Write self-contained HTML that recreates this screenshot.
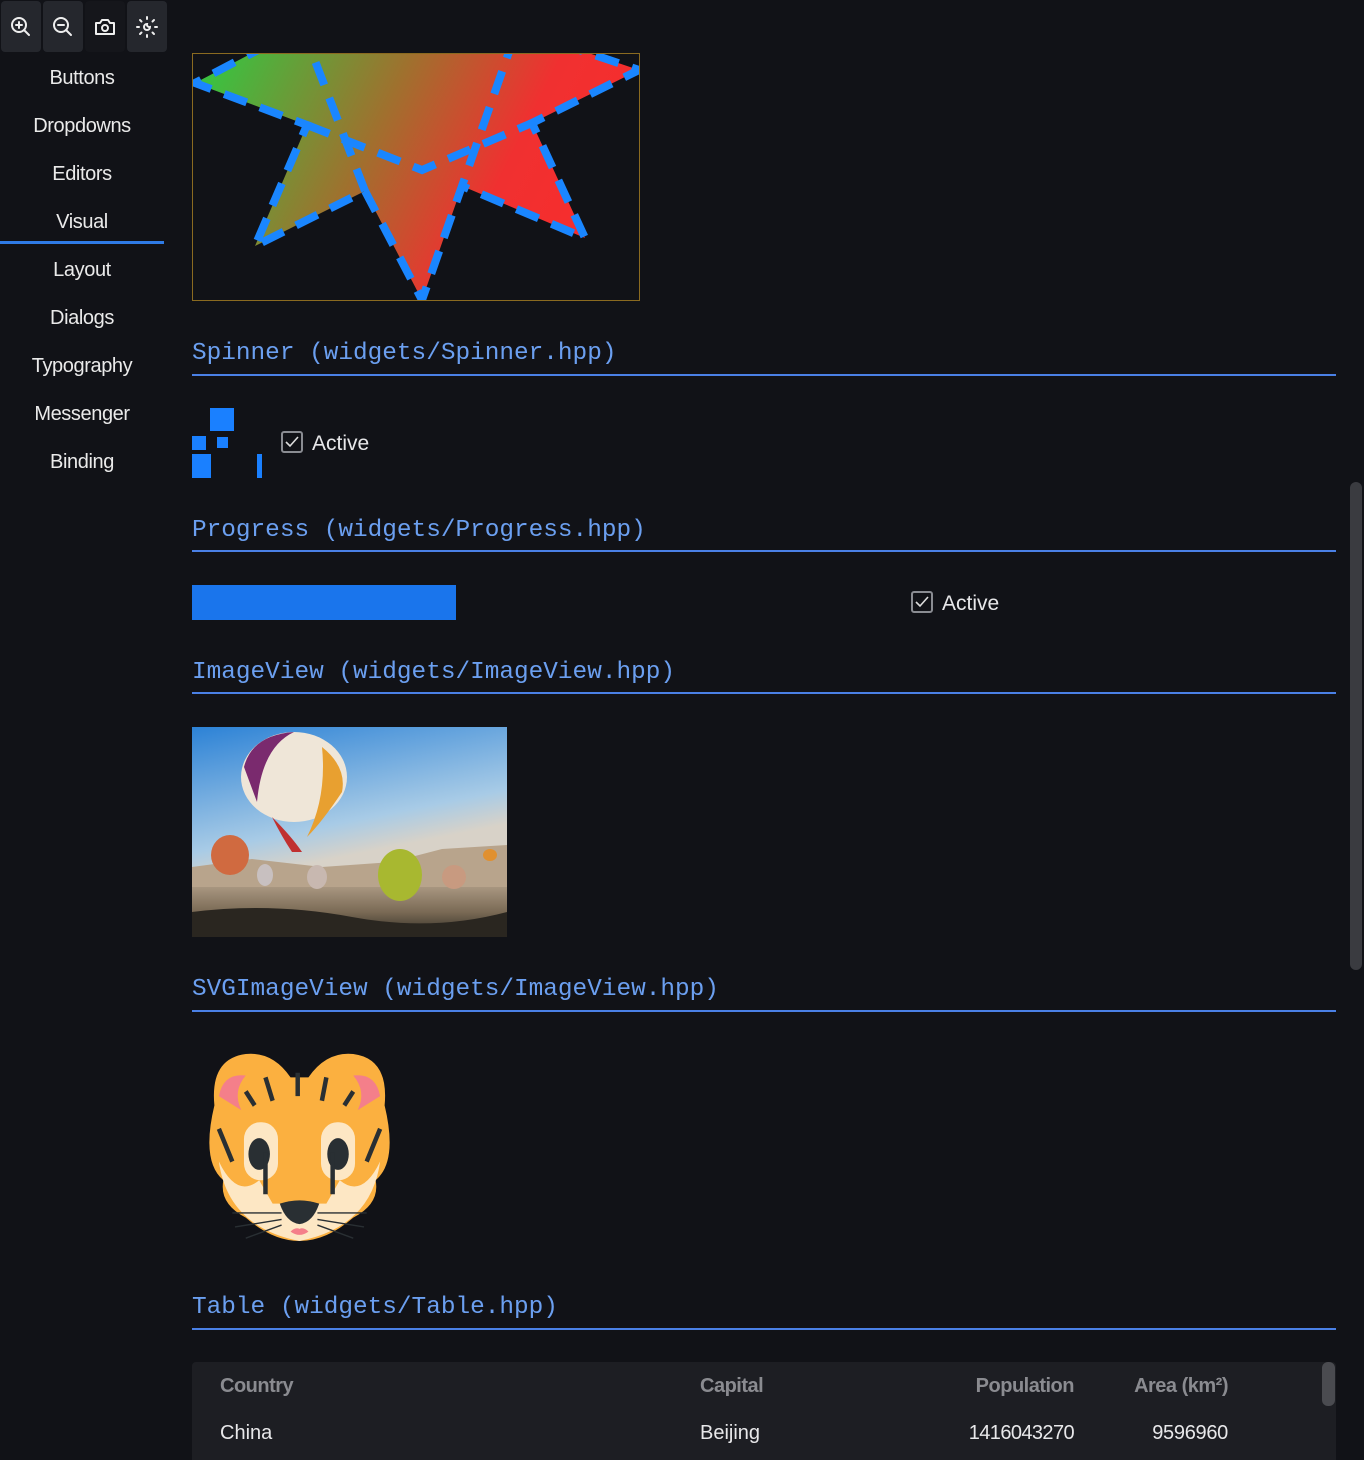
<!DOCTYPE html>
<html><head><meta charset="utf-8"><style>
*{margin:0;padding:0;box-sizing:border-box}
body{width:1364px;height:1460px;background:#111217;overflow:hidden;position:relative;font-family:"Liberation Sans",sans-serif;color:#e8e8ea}
.tb{position:absolute;top:1px;width:40px;height:51px;background:#25272d;border-radius:4px;display:flex;align-items:center;justify-content:center}
.nav{position:absolute;left:0;width:164px;text-align:center;font-size:20px;color:#eaeaea;letter-spacing:-0.4px}
.h{position:absolute;left:192px;font-family:"Liberation Mono",monospace;font-size:24.4px;color:#6b9ff0;white-space:pre}
.ln{position:absolute;left:192px;width:1144px;height:2px;background:#4a80e6}
.cb{position:absolute;width:22px;height:22px;border:2px solid #8a8c92;border-radius:3px}
.lbl{position:absolute;font-size:21px;color:#e8e8ea}
</style></head><body>
<div class="tb" style="left:1px"><svg width="24" height="24" viewBox="0 0 24 24" fill="none" stroke="#eee" stroke-width="2" stroke-linecap="round"><circle cx="10" cy="10" r="7"/><path d="M15 15l5 5M10 7v6M7 10h6"/></svg></div>
<div class="tb" style="left:43px"><svg width="24" height="24" viewBox="0 0 24 24" fill="none" stroke="#eee" stroke-width="2" stroke-linecap="round"><circle cx="10" cy="10" r="7"/><path d="M15 15l5 5M7 10h6"/></svg></div>
<div class="tb" style="left:85px;background:#15161b"><svg width="24" height="24" viewBox="0 0 24 24" fill="none" stroke="#eee" stroke-width="2" stroke-linejoin="round"><path d="M3 8h4l2-3h6l2 3h4v11H3z"/><circle cx="12" cy="13" r="3"/></svg></div>
<div class="tb" style="left:127px"><svg width="24" height="24" viewBox="0 0 24 24" fill="none" stroke="#eee" stroke-width="2" stroke-linecap="round"><path d="M12 2v2M12 20v2M2 12h2M20 12h2M5 5l1.5 1.5M17.5 17.5L19 19M5 19l1.5-1.5M17.5 6.5L19 5"/><path d="M15 12a3 3 0 1 1-3-3 2.5 2.5 0 0 0 3 3z"/></svg></div>

<div class="nav" style="top:67px">Buttons</div>
<div class="nav" style="top:115px">Dropdowns</div>
<div class="nav" style="top:163px">Editors</div>
<div class="nav" style="top:211px">Visual</div>
<div style="position:absolute;left:0;top:241px;width:164px;height:3px;background:#2f7be6"></div>
<div class="nav" style="top:259px">Layout</div>
<div class="nav" style="top:307px">Dialogs</div>
<div class="nav" style="top:355px">Typography</div>
<div class="nav" style="top:403px">Messenger</div>
<div class="nav" style="top:451px">Binding</div>

<svg style="position:absolute;left:192px;top:53px" width="448" height="248" viewBox="192 53 448 248">
<defs><linearGradient id="g" gradientUnits="userSpaceOnUse" x1="220" y1="60" x2="560" y2="230"><stop offset="0" stop-color="#3cc040"/><stop offset="0.45" stop-color="#a0702e"/><stop offset="0.8" stop-color="#f03030"/><stop offset="1" stop-color="#f52e2e"/></linearGradient>
<clipPath id="c"><rect x="192" y="53" width="448" height="248"/></clipPath></defs>
<g clip-path="url(#c)">
<path d="M195 83 L307 125 L255 246 L365 191 L422 300 L462 186 L585 238 L532 123 L639 70 L517 29 L302 27 Z" fill="url(#g)"/>
<g fill="none" stroke="#1a86ff" stroke-width="8" stroke-dasharray="24 14">
<path d="M302 27 L195 83 L307 125 L255 246 L365 191 L422 300 L462 186 L585 238 L532 123 L639 70 L517 29 L462 186"/>
<path d="M302 27 L365 191"/>
<path d="M307 125 L422 170 L532 123"/>
</g>
</g>
<rect x="192.5" y="53.5" width="447" height="247" fill="none" stroke="#8a6a20" stroke-width="1"/>
</svg>

<div class="h" style="top:340px">Spinner (widgets/Spinner.hpp)</div>
<div class="ln" style="top:374px"></div>
<div style="position:absolute;left:210px;top:408px;width:24px;height:23px;background:#1a80ff"></div>
<div style="position:absolute;left:192px;top:436px;width:14px;height:14px;background:#1a80ff"></div>
<div style="position:absolute;left:217px;top:437px;width:11px;height:11px;background:#1a80ff"></div>
<div style="position:absolute;left:192px;top:454px;width:19px;height:24px;background:#1a80ff"></div>
<div style="position:absolute;left:257px;top:454px;width:5px;height:24px;background:#1a80ff"></div>
<div class="cb" style="left:281px;top:431px"><svg width="18" height="18" viewBox="0 0 18 18"><path d="M3 9l4 4 8-9" fill="none" stroke="#ddd" stroke-width="1.6"/></svg></div>
<div class="lbl" style="left:312px;top:432px">Active</div>

<div class="h" style="top:517px">Progress (widgets/Progress.hpp)</div>
<div class="ln" style="top:550px"></div>
<div style="position:absolute;left:192px;top:585px;width:264px;height:35px;background:#1a75ec"></div>
<div class="cb" style="left:911px;top:591px"><svg width="18" height="18" viewBox="0 0 18 18"><path d="M3 9l4 4 8-9" fill="none" stroke="#ddd" stroke-width="1.6"/></svg></div>
<div class="lbl" style="left:942px;top:592px">Active</div>

<div class="h" style="top:659px">ImageView (widgets/ImageView.hpp)</div>
<div class="ln" style="top:692px"></div>
<svg style="position:absolute;left:192px;top:727px" width="315" height="210" viewBox="0 0 315 210">
<defs><linearGradient id="sky" x1="0" y1="0" x2="0.3" y2="1"><stop offset="0" stop-color="#2c82d6"/><stop offset="0.55" stop-color="#a8cbe6"/><stop offset="0.7" stop-color="#d8d2c8"/></linearGradient>
<linearGradient id="gr" x1="0" y1="0" x2="0" y2="1"><stop offset="0" stop-color="#a89680"/><stop offset="0.5" stop-color="#7a6a55"/><stop offset="1" stop-color="#2e2a24"/></linearGradient></defs>
<rect width="315" height="210" fill="url(#sky)"/>
<path d="M0 140 L60 132 L130 140 L200 135 L250 122 L315 118 V210 H0Z" fill="#b8a48c"/>
<rect y="160" width="315" height="50" fill="url(#gr)"/>
<path d="M0 185 Q80 175 160 190 T315 185 V210 H0Z" fill="#2a2620"/>
<ellipse cx="102" cy="50" rx="53" ry="45" fill="#efe6d8"/>
<path d="M52 40 Q60 8 102 5 Q70 20 65 75Z" fill="#7a2a6e"/>
<path d="M130 20 Q155 40 150 65 Q130 95 115 110 Q135 70 130 20Z" fill="#e8a030"/>
<path d="M80 90 Q100 110 110 125 L100 125 Q90 110 80 90Z" fill="#c03030"/>
<ellipse cx="38" cy="128" rx="19" ry="20" fill="#d06a40"/>
<ellipse cx="208" cy="148" rx="22" ry="26" fill="#a8b830"/>
<ellipse cx="262" cy="150" rx="12" ry="12" fill="#c89a80"/>
<ellipse cx="73" cy="148" rx="8" ry="11" fill="#c8c0c0"/>
<ellipse cx="125" cy="150" rx="10" ry="12" fill="#c8b8b0"/>
<ellipse cx="298" cy="128" rx="7" ry="6" fill="#e09030"/>
</svg>

<div class="h" style="top:976px">SVGImageView (widgets/ImageView.hpp)</div>
<div class="ln" style="top:1010px"></div>
<svg style="position:absolute;left:192px;top:1040px" width="215" height="215" viewBox="0 0 240 230" preserveAspectRatio="none">
<path d="M25 70 Q20 20 60 15 Q90 12 110 40 L130 40 Q150 12 180 15 Q220 20 215 70 Q230 130 205 150 Q210 175 180 190 Q150 215 120 215 Q90 215 60 190 Q30 175 35 150 Q10 130 25 70Z" fill="#fbb040"/>
<path d="M30 130 Q40 200 120 215 Q200 200 210 130 Q190 170 165 150 L150 175 L90 175 L75 150 Q50 170 30 130Z" fill="#fde7c4"/>
<path d="M30 60 Q35 35 60 38 Q45 55 55 75Z" fill="#f47f8a"/>
<path d="M210 60 Q205 35 180 38 Q195 55 185 75Z" fill="#f47f8a"/>
<rect x="58" y="88" width="38" height="62" rx="18" fill="#fde7c4"/>
<rect x="144" y="88" width="38" height="62" rx="18" fill="#fde7c4"/>
<ellipse cx="75" cy="122" rx="12" ry="17" fill="#292f33"/>
<ellipse cx="163" cy="122" rx="12" ry="17" fill="#292f33"/>
<path d="M82 120 V165M157 120 V165M82 40 L90 65M118 35 L118 60M150 40 L145 65M60 55 L70 70M180 55 L170 70M30 95 L45 130M210 95 L195 130" stroke="#292f33" stroke-width="5"/>
<path d="M98 175 Q120 168 142 175 Q135 195 120 197 Q105 195 98 175Z" fill="#292f33"/>
<path d="M110 205 Q120 212 130 205 Q125 200 120 202 Q115 200 110 205Z" fill="#f47f8a"/>
<path d="M45 185 L100 185M48 200 L100 192M60 212 L100 198M195 185 L140 185M192 200 L140 192M180 212 L140 198" stroke="#292f33" stroke-width="1.5"/>
</svg>

<div class="h" style="top:1294px">Table (widgets/Table.hpp)</div>
<div class="ln" style="top:1328px"></div>
<div style="position:absolute;left:192px;top:1362px;width:1144px;height:98px;background:#1d1e23;border-radius:4px 4px 0 0"></div>
<div style="position:absolute;left:1322px;top:1362px;width:13px;height:44px;background:#4a4b50;border-radius:6px"></div>
<div style="position:absolute;left:220px;top:1375px;font-size:20px;font-weight:bold;color:#8a8b90;letter-spacing:-0.5px">Country</div>
<div style="position:absolute;left:700px;top:1375px;font-size:20px;font-weight:bold;color:#8a8b90;letter-spacing:-0.5px">Capital</div>
<div style="position:absolute;right:290px;top:1375px;font-size:20px;font-weight:bold;color:#8a8b90;letter-spacing:-0.5px">Population</div>
<div style="position:absolute;right:136px;top:1375px;font-size:20px;font-weight:bold;color:#8a8b90;letter-spacing:-0.5px">Area (km²)</div>
<div style="position:absolute;left:220px;top:1422px;font-size:20px">China</div>
<div style="position:absolute;left:700px;top:1422px;font-size:20px">Beijing</div>
<div style="position:absolute;right:290px;top:1422px;font-size:20px;letter-spacing:-0.6px">1416043270</div>
<div style="position:absolute;right:136px;top:1422px;font-size:20px;letter-spacing:-0.3px">9596960</div>

<div style="position:absolute;left:1350px;top:482px;width:12px;height:488px;background:#3a3b40;border-radius:6px"></div>
</body></html>
